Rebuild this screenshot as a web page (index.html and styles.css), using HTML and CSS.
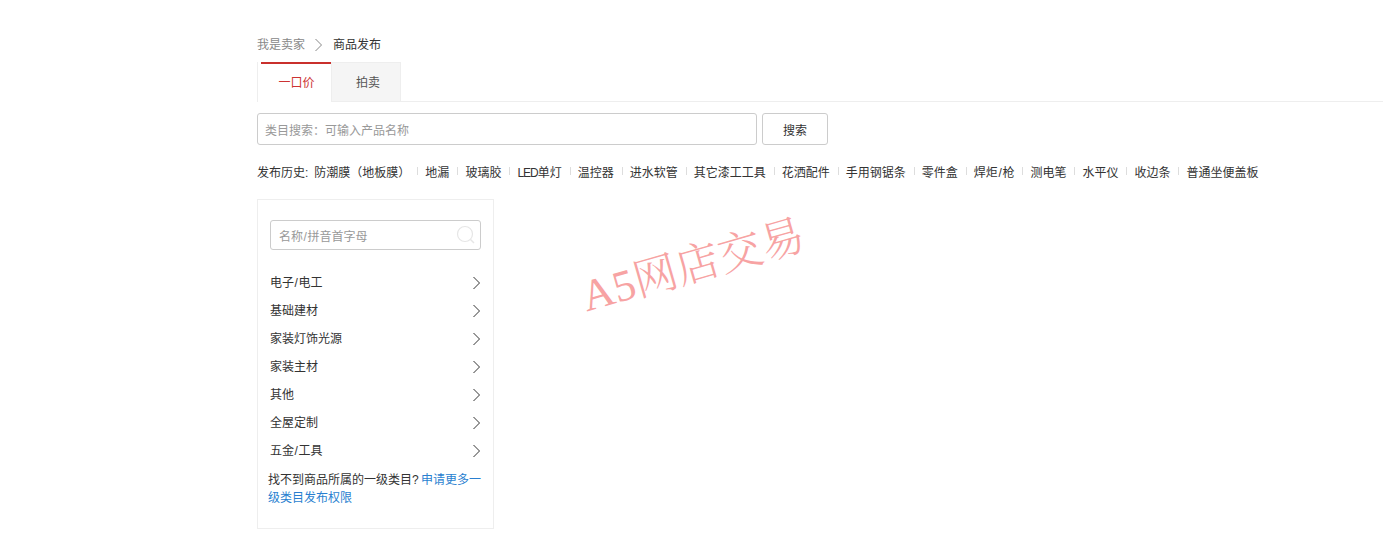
FILE: index.html
```html
<!DOCTYPE html>
<html lang="zh-CN">
<head>
<meta charset="utf-8">
<title>商品发布</title>
<link rel="stylesheet" href="styles.css">
</head>
<body>
<main class="page">
  <nav class="crumbs">
    <span class="crumb-parent">我是卖家</span>
    <svg class="crumb-sep" width="9" height="14" viewBox="0 0 9 14"><path d="M1.5 1 L7.5 7 L1.5 13" fill="none" stroke="#888" stroke-width="1"/></svg>
    <span class="crumb-current">商品发布</span>
  </nav>
  <div class="tabs">
    <div class="tab tab-active">一口价</div>
    <div class="tab tab-plain">拍卖</div>
  </div>
  <div class="search-row">
    <div class="search-input">类目搜索：可输入产品名称</div>
    <button class="search-btn">搜索</button>
  </div>
  <div class="history">
    <span class="history-label">发布历史:</span>
    <span class="hist first">防潮膜（地板膜）</span>
    <span class="hist">地漏</span>
    <span class="hist">玻璃胶</span>
    <span class="hist"><span class="latin">LED</span>单灯</span>
    <span class="hist">温控器</span>
    <span class="hist">进水软管</span>
    <span class="hist">其它漆工工具</span>
    <span class="hist">花洒配件</span>
    <span class="hist">手用钢锯条</span>
    <span class="hist">零件盒</span>
    <span class="hist">焊炬<span class="slash">/</span>枪</span>
    <span class="hist">测电笔</span>
    <span class="hist">水平仪</span>
    <span class="hist">收边条</span>
    <span class="hist">普通坐便盖板</span>
  </div>
  <section class="panel">
    <div class="filter">
      <span class="filter-text">名称<span class="slash">/</span>拼音首字母</span>
      <svg width="20" height="20" viewBox="0 0 20 20"><circle cx="9" cy="9" r="7.5" fill="none" stroke="#e6e6e6" stroke-width="1.2"/><path d="M14.5 14.5 L18 18" stroke="#e6e6e6" stroke-width="1.4"/></svg>
    </div>
    <ul class="cats">
      <li class="cat"><span>电子<span class="slash">/</span>电工</span><svg class="chev" width="9" height="14" viewBox="0 0 9 14"><path d="M1.5 1 L7.5 7 L1.5 13" fill="none" stroke="#333" stroke-width="1"/></svg></li>
      <li class="cat">基础建材<svg class="chev" width="9" height="14" viewBox="0 0 9 14"><path d="M1.5 1 L7.5 7 L1.5 13" fill="none" stroke="#333" stroke-width="1"/></svg></li>
      <li class="cat">家装灯饰光源<svg class="chev" width="9" height="14" viewBox="0 0 9 14"><path d="M1.5 1 L7.5 7 L1.5 13" fill="none" stroke="#333" stroke-width="1"/></svg></li>
      <li class="cat">家装主材<svg class="chev" width="9" height="14" viewBox="0 0 9 14"><path d="M1.5 1 L7.5 7 L1.5 13" fill="none" stroke="#333" stroke-width="1"/></svg></li>
      <li class="cat">其他<svg class="chev" width="9" height="14" viewBox="0 0 9 14"><path d="M1.5 1 L7.5 7 L1.5 13" fill="none" stroke="#333" stroke-width="1"/></svg></li>
      <li class="cat">全屋定制<svg class="chev" width="9" height="14" viewBox="0 0 9 14"><path d="M1.5 1 L7.5 7 L1.5 13" fill="none" stroke="#333" stroke-width="1"/></svg></li>
      <li class="cat"><span>五金<span class="slash">/</span>工具</span><svg class="chev" width="9" height="14" viewBox="0 0 9 14"><path d="M1.5 1 L7.5 7 L1.5 13" fill="none" stroke="#333" stroke-width="1"/></svg></li>
    </ul>
    <p class="apply">找不到商品所属的一级类目? <a class="apply-link">申请更多一级类目发布权限</a></p>
  </section>
  <div class="watermark">A5网店交易</div>
</main>
</body>
</html>
```
FILE: styles.css
```css
* { box-sizing: border-box; }
html, body { margin: 0; padding: 0; background: #fff; overflow: hidden; }
body {
  height: 533px;
  font-family: "Liberation Sans", "Noto Sans CJK SC", sans-serif;
  font-size: 12px;
  color: #333;
}
.page { position: relative; padding: 37px 0 0 257px; }
.crumbs { display: flex; align-items: center; height: 17px; line-height: 17px; }
.crumb-parent { color: #888; }
.crumb-sep { margin: -1px 10px 0 9px; }
.crumb-current { color: #333; }
.tabs { display: flex; height: 40px; margin-top: 8px; border-bottom: 1px solid #eee; }
.tab {
  width: 70px; height: 39px; line-height: 40px; text-align: center;
  background: #f5f5f5; border: 1px solid #eee; border-bottom: 0; color: #555;
}
.tab-plain { padding-left: 4px; }
.tab-active {
  position: relative; width: 74px; padding-left: 4px; height: 40px; line-height: 43px;
  background: #fff; color: #c33; border: 0; border-left: 1px solid #eee; z-index: 1;
}
.tab-active::before {
  content: ""; position: absolute; left: 3px; right: 0; top: 0; height: 2px; background: #c9302c;
}
.search-row { display: flex; gap: 5px; margin-top: 11px; }
.search-input {
  width: 500px; height: 32px; line-height: 32px; padding: 1px 0 0 7px;
  border: 1px solid #ccc; border-radius: 3px; color: #999; font-size: 12px;
}
.search-btn {
  width: 66px; height: 32px; padding: 0; background: #fff; border: 1px solid #ccc; border-radius: 3px;
  font: inherit; color: #333;
}
.history { display: flex; align-items: center; height: 16px; margin-top: 18px; white-space: nowrap; color: #333; }
.history-label { margin-right: 6px; }
.hist { position: relative; margin-left: 16px; }
.hist.first { margin: 0 -1px 0 0; }
.hist:not(.first)::before {
  content: ""; position: absolute; left: -8px; top: 4px; width: 1px; height: 8px; background: #ddd;
}
.latin { letter-spacing: -1px; }
.slash { margin: 0 0.6px; }
.panel {
  width: 237px; height: 330px; margin-top: 20px; padding: 20px 12px 0 12px;
  border: 1px solid #eee;
}
.filter {
  display: flex; align-items: center; justify-content: space-between;
  width: 211px; height: 30px; padding: 0 0 0 8px;
  border: 1px solid #ccc; border-radius: 3px; color: #999; font-size: 12px;
}
.filter-text { padding-top: 1px; }
.filter svg { margin-right: 4px; }
.cats { list-style: none; margin: 17px 0 0; padding: 0; }
.cat { display: flex; align-items: center; justify-content: space-between; height: 28px; color: #333; }
.chev { margin-top: 3px; }
.apply { margin: 8px 0 0 -2px; width: 215px; line-height: 18px; color: #333; }
.apply-link { color: #2a7fd0; margin-left: -1px; }
.watermark {
  position: absolute; left: 583px; top: 276px; transform: rotate(-16deg); transform-origin: left center;
  font-family: "Liberation Serif", "Noto Serif CJK SC", "Noto Sans CJK SC", serif;
  font-size: 44px; line-height: 44px; color: #f7a3a3; white-space: nowrap; font-weight: 300;
}
```
